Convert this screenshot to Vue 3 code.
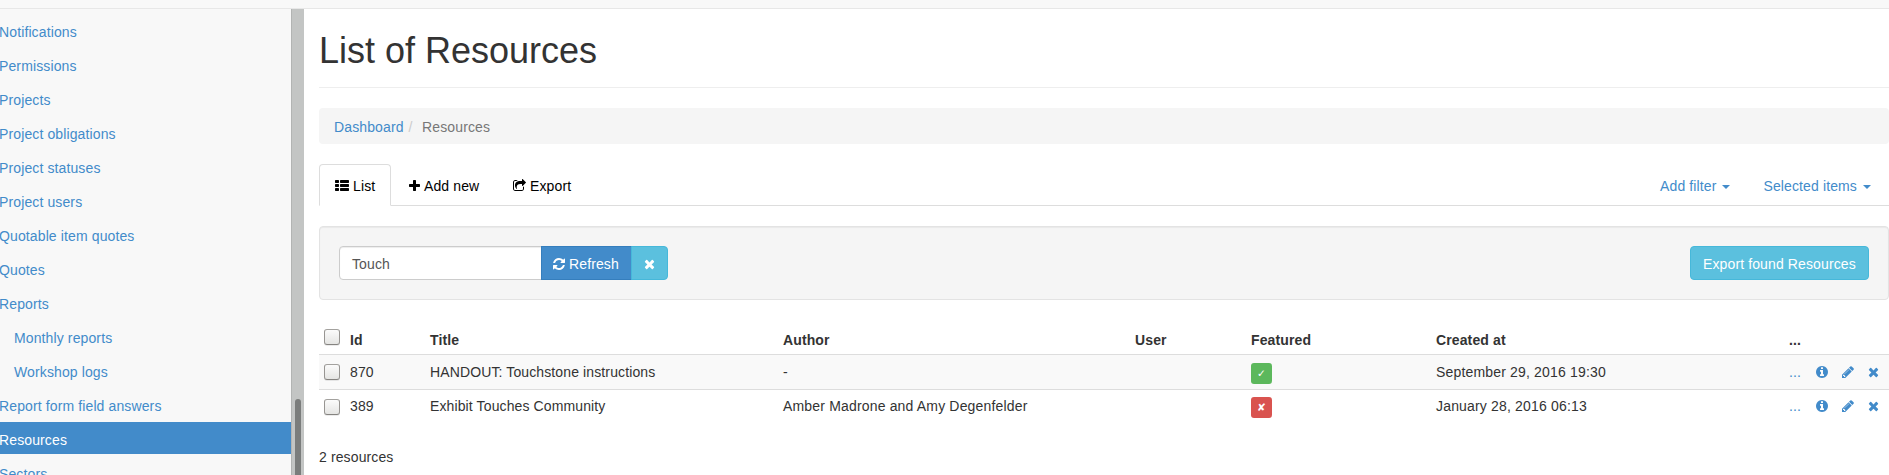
<script setup>
const nav = [
  { label: 'Notifications' },
  { label: 'Permissions' },
  { label: 'Projects' },
  { label: 'Project obligations' },
  { label: 'Project statuses' },
  { label: 'Project users' },
  { label: 'Quotable item quotes' },
  { label: 'Quotes' },
  { label: 'Reports' },
  { label: 'Monthly reports', nested: true },
  { label: 'Workshop logs', nested: true },
  { label: 'Report form field answers' },
  { label: 'Resources', active: true },
  { label: 'Sectors' },
]

const rows = [
  { id: 870, title: 'HANDOUT: Touchstone instructions', author: '-', featured: true, created: 'September 29, 2016 19:30' },
  { id: 389, title: 'Exhibit Touches Community', author: 'Amber Madrone and Amy Degenfelder', featured: false, created: 'January 28, 2016 06:13' },
]

const icons = {
  times: 'M1490 1322q0 40-28 68l-136 136q-28 28-68 28t-68-28l-294-294-294 294q-28 28-68 28t-68-28l-136-136q-28-28-28-68t28-68l294-294-294-294q-28-28-28-68t28-68l136-136q28-28 68-28t68 28l294 294 294-294q28-28 68-28t68 28l136 136q28 28 28 68t-28 68l-294 294 294 294q28 28 28 68z',
  plus: 'M1600 736v192q0 40-28 68t-68 28h-416v416q0 40-28 68t-68 28h-192q-40 0-68-28t-28-68v-416h-416q-40 0-68-28t-28-68v-192q0-40 28-68t68-28h416v-416q0-40 28-68t68-28h192q40 0 68 28t28 68v416h416q40 0 68 28t28 68z',
  list: 'M512 1248v192q0 40-28 68t-68 28h-320q-40 0-68-28t-28-68v-192q0-40 28-68t68-28h320q40 0 68 28t28 68zM512 736v192q0 40-28 68t-68 28h-320q-40 0-68-28t-28-68v-192q0-40 28-68t68-28h320q40 0 68 28t28 68zM1792 1248v192q0 40-28 68t-68 28h-960q-40 0-68-28t-28-68v-192q0-40 28-68t68-28h960q40 0 68 28t28 68zM512 224v192q0 40-28 68t-68 28h-320q-40 0-68-28t-28-68v-192q0-40 28-68t68-28h320q40 0 68 28t28 68zM1792 736v192q0 40-28 68t-68 28h-960q-40 0-68-28t-28-68v-192q0-40 28-68t68-28h960q40 0 68 28t28 68zM1792 224v192q0 40-28 68t-68 28h-960q-40 0-68-28t-28-68v-192q0-40 28-68t68-28h960q40 0 68 28t28 68z',
  share: 'M1472 989v259q0 119-84.5 203.5t-203.5 84.5h-832q-119 0-203.5-84.5t-84.5-203.5v-832q0-119 84.5-203.5t203.5-84.5h255q13 0 22.5 9.5t9.5 22.5q0 27-26 32-77 26-133 60-10 4-16 4h-112q-66 0-113 47t-47 113v832q0 66 47 113t113 47h832q66 0 113-47t47-113v-214q0-19 18-29 28-13 54-37 16-16 35-8 21 9 21 31zm237-496l-384 384q-18 19-45 19-12 0-25-5-39-17-39-59v-192h-160q-323 0-438 131-119 137-74 473 3 23-20 34-8 2-12 2-16 0-26-13-10-14-21-31t-39.5-68.5-49.5-99.5-38.5-114-17.5-122q0-49 3.5-91t14-90 28-88 47-81.5 68.5-74 94.5-61.5 124.5-48.5 159.5-30.5 196.5-11h160v-192q0-42 39-59 13-5 25-5 26 0 45 19l384 384q19 19 19 45t-19 45z',
  refresh: 'M1639 1056q0 5-1 7-64 268-268 434.5t-478 166.5q-146 0-282.5-55t-243.5-157l-129 129q-19 19-45 19t-45-19-19-45v-448q0-26 19-45t45-19h448q26 0 45 19t19 45-19 45l-137 137q71 66 161 102t187 36q134 0 250-65t186-179q11-17 53-117 8-23 30-23h192q13 0 22.5 9.5t9.5 22.5zm25-800v448q0 26-19 45t-45 19h-448q-26 0-45-19t-19-45 19-45l138-138q-148-137-349-137-134 0-250 65t-186 179q-11 17-53 117-8 23-30 23h-199q-13 0-22.5-9.5t-9.5-22.5v-7q65-268 270-434.5t480-166.5q146 0 284 55.5t245 156.5l130-129q19-19 45-19t45 19 19 45z',
  info: 'M1152 1376v-160q0-14-9-23t-23-9h-96v-512q0-14-9-23t-23-9h-320q-14 0-23 9t-9 23v160q0 14 9 23t23 9h96v320h-96q-14 0-23 9t-9 23v160q0 14 9 23t23 9h448q14 0 23-9t9-23zm-128-896v-160q0-14-9-23t-23-9h-192q-14 0-23 9t-9 23v160q0 14 9 23t23 9h192q14 0 23-9t9-23zm640 416q0 209-103 385.5t-279.5 279.5-385.5 103-385.5-103-279.5-279.5-103-385.5 103-385.5 279.5-279.5 385.5-103 385.5 103 279.5 279.5 103 385.5z',
  pencil: 'M491 1536l91-91-235-235-91 91v107h128v128h107zm523-928q0-22-22-22-10 0-17 7l-542 542q-7 7-7 17 0 22 22 22 10 0 17-7l542-542q7-7 7-17zm-54-192l416 416-832 832h-416v-416zm683 96q0 53-37 90l-166 166-416-416 166-165q36-38 90-38 53 0 91 38l235 234q37 39 37 91z',
}
</script>

<template>
  <div class="page">
    <header class="navbar"></header>
    <div class="body">
      <aside class="sidebar">
        <nav class="menu">
          <a v-for="n in nav" :key="n.label" class="item" :class="{ nested: n.nested, active: n.active }">{{ n.label }}</a>
        </nav>
        <div class="track"><div class="thumb"></div></div>
      </aside>
      <main class="main">
        <h1>List of Resources</h1>
        <div class="crumbs"><a>Dashboard</a><span class="slash">/</span><span class="here">Resources</span></div>
        <div class="tabs">
          <a class="tab current"><svg class="w14" viewBox="0 0 1792 1792"><path :d="icons.list" /></svg>List</a>
          <a class="tab add"><svg class="w11" viewBox="192 0 1408 1792"><path :d="icons.plus" /></svg>Add new</a>
          <a class="tab"><svg class="w13" viewBox="64 0 1664 1792"><path :d="icons.share" /></svg>Export</a>
          <a class="drop filter">Add filter<i class="caret"></i></a>
          <a class="drop">Selected items<i class="caret"></i></a>
        </div>
        <section class="well">
          <div class="group">
            <div class="input">Touch</div>
            <div class="btn refresh"><svg class="w12" viewBox="128 0 1536 1792"><path :d="icons.refresh" /></svg>Refresh</div>
            <div class="btn clear"><svg class="w11" viewBox="192 0 1408 1792"><path :d="icons.times" /></svg></div>
          </div>
          <div class="btn export">Export found Resources</div>
        </section>
        <div class="table">
          <div class="row head">
            <span class="cell"><i class="box"></i></span>
            <span>Id</span><span>Title</span><span>Author</span><span>User</span><span>Featured</span><span>Created at</span><span>...</span>
          </div>
          <div v-for="r in rows" :key="r.id" class="row data">
            <span class="cell"><i class="box"></i></span>
            <span>{{ r.id }}</span>
            <span>{{ r.title }}</span>
            <span class="wide">{{ r.author }}</span>
            <span></span>
            <span class="cell"><b class="badge" :class="{ yes: r.featured }">{{ r.featured ? '✓' : '✘' }}</b></span>
            <span class="wide">{{ r.created }}</span>
            <span class="actions">
              <a class="dots">...</a>
              <svg class="w12" viewBox="128 0 1536 1792"><path :d="icons.info" /></svg>
              <svg class="w12" viewBox="128 0 1536 1792"><path :d="icons.pencil" /></svg>
              <svg class="w11" viewBox="192 0 1408 1792"><path :d="icons.times" /></svg>
            </span>
          </div>
        </div>
        <p class="total">2 resources</p>
      </main>
    </div>
  </div>
</template>

<style>
body { margin: 0; overflow: hidden; }
</style>

<style scoped>
* { box-sizing: border-box; }
.page {
  width: 1889px;
  height: 475px;
  overflow: hidden;
  display: flex;
  flex-direction: column;
  background: #fff;
  color: #333;
  font: 14px/20px "Liberation Sans", Arial, sans-serif;
  letter-spacing: 0.12px;
  white-space: nowrap;
}
a { color: #428bca; text-decoration: none; }
svg { height: 14px; fill: currentColor; vertical-align: -2px; flex: none; }
.w11 { width: 11px; }
.w12 { width: 12px; }
.w13 { width: 13px; }
.w14 { width: 14px; }
.navbar { flex: none; height: 9px; background: #f8f8f8; border-bottom: 1px solid #e7e7e7; }
.body { display: flex; flex: 1; min-height: 0; }
.sidebar { width: 304px; flex: none; display: flex; overflow: hidden; background: #f8f8f8; }
.menu { width: 291px; padding-top: 5px; }
.item { display: block; height: 32px; margin-bottom: 2px; padding-top: 8px; text-indent: -1px; }
.nested { padding-left: 15px; }
.active { background: #428bca; color: #fff; }
.track { width: 13px; background: #c3c5c4; border-left: 1px solid #b2b4b3; padding: 390px 3px 0; }
.thumb { width: 6px; height: 90px; border-radius: 3px 3px 0 0; background: #7b7d7c; }
.main { flex: 1; padding-left: 15px; min-width: 0; }
h1 { margin: 0; height: 79px; padding-top: 22px; border-bottom: 1px solid #eee; font-size: 36px; line-height: 40px; font-weight: 400; letter-spacing: 0; }
.crumbs { height: 36px; margin-top: 20px; padding: 9px 15px; background: #f5f5f5; border-radius: 4px; }
.slash { color: #ccc; padding: 0 9.5px 0 5px; }
.here { color: #777; }
.tabs { display: flex; height: 42px; margin-top: 20px; border-bottom: 1px solid #ddd; }
.tab { height: 42px; padding: 12px 16px 0; color: #000; margin-right: 2px; }
.tab svg { margin-right: 4px; }
.current { width: 72px; padding: 11px 15px 0; border: 1px solid #ddd; border-bottom-color: #fff; border-radius: 4px 4px 0 0; background: #fff; }
.add { width: 102px; }
.drop { padding: 12px 18px 0 16px; display: flex; }
.filter { margin-left: auto; margin-right: -1px; }
.caret { margin: 9px 0 0 6px; width: 8px; height: 4px; border: 4px solid transparent; border-top-color: #428bca; border-bottom: 0; }
.well { display: flex; justify-content: space-between; height: 74px; margin-top: 20px; padding: 19px; border: 1px solid #e3e3e3; border-radius: 4px; background: #f5f5f5; box-shadow: inset 0 1px 1px rgba(0, 0, 0, 0.05); }
.group { display: flex; }
.input { width: 203px; height: 34px; padding: 7px 12px; margin-right: -1px; border: 1px solid #ccc; border-radius: 4px 0 0 4px; background: #fff; color: #555; box-shadow: inset 0 1px 1px rgba(0, 0, 0, 0.075); }
.btn { height: 34px; padding: 7px 12px 0; border: 1px solid #357ebd; color: #fff; }
.refresh { width: 91px; padding-left: 11px; background: #428bca; }
.refresh svg { margin-right: 4px; }
.clear { width: 37px; margin-left: -1px; border-color: #46b8da; background: #5bc0de; border-radius: 0 4px 4px 0; }
.export { width: 179px; border-color: #46b8da; background: #5bc0de; border-radius: 4px; }
.table { margin-top: 20px; }
.row { display: grid; grid-template-columns: 31px 80px 353px 352px 116px 185px 353px 1fr; height: 35px; }
.head { height: 34px; padding-top: 10px; font-weight: 700; }
.data { border-top: 1px solid #ddd; padding-top: 6px; }
.data:nth-child(2) { background: #f9f9f9; padding-top: 7px; }
.cell { display: flex; align-items: flex-start; }
.wide { letter-spacing: 0.17px; }
.box { width: 16px; height: 16px; margin: 3px 0 0 5px; border: 1px solid; border-color: #a3a19e #979592 #858380; border-radius: 3px; background: linear-gradient(#fbfbfb, #e5e5e3); box-shadow: 0 1px 0 rgba(0, 0, 0, 0.08); }
.head .box { margin-top: -1px; }
.data:nth-child(2) .box { margin-top: 2px; }
.badge { width: 21px; height: 21px; margin-top: 1px; border-radius: 3px; background: #d9534f; color: #fff; font: 700 10.5px/20px "DejaVu Sans", sans-serif; text-align: center; }
.yes { background: #5cb85c; }
.actions { display: flex; align-items: flex-start; color: #428bca; }
.dots { width: 27px; }
.actions svg { margin: 3px 14px 0 0; }
.total { margin: 23px 0 0; }
</style>
